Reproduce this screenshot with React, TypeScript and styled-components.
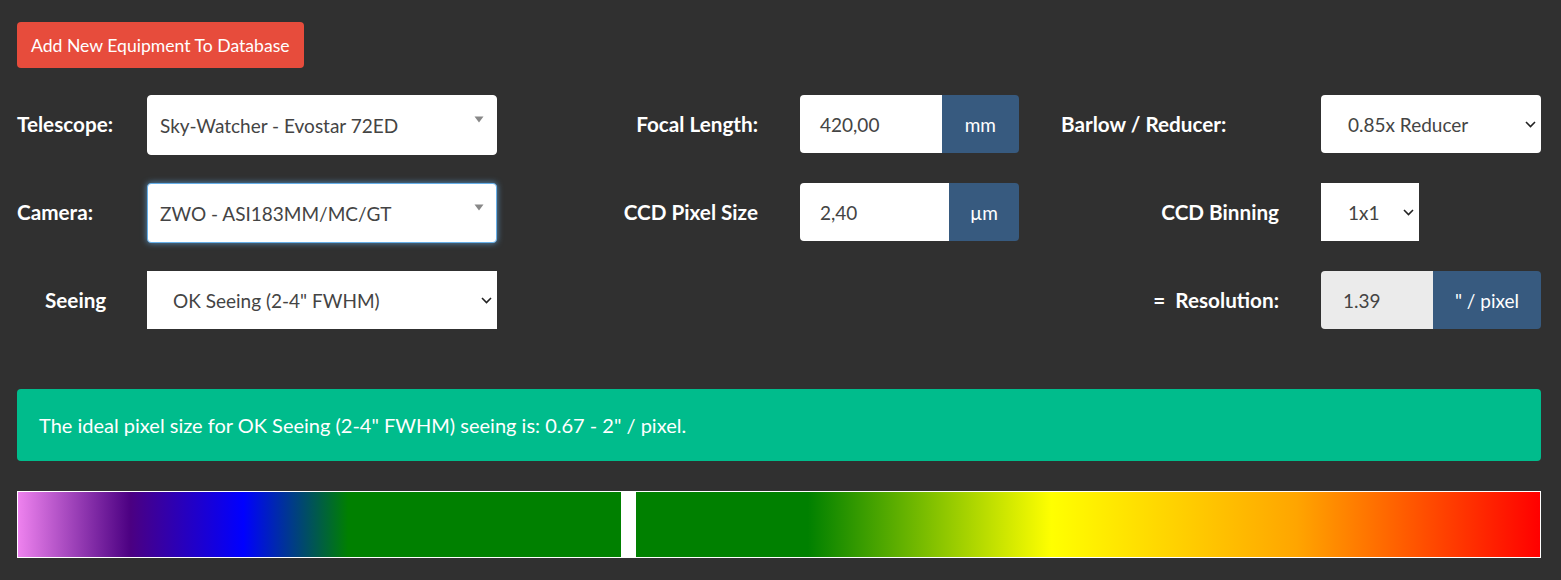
import React from 'react'
import styled, { createGlobalStyle, css } from 'styled-components'

const GlobalStyle = createGlobalStyle`
  html, body {
    margin: 0;
    padding: 0;
    background: #303030;
  }
  body {
    font-family: Lato, 'Open Sans', 'Liberation Sans', sans-serif;
    color: #fff;
  }
`

const Page = styled.div`
  padding: 22px 20px 22px 17px;
  width: 1524px;
`

const AddButton = styled.button`
  display: block;
  height: 46px;
  padding: 0 14px;
  border: none;
  border-radius: 4px;
  background: #e74c3c;
  color: #fff;
  font-family: inherit;
  font-size: 17.6px;
  cursor: pointer;
`

const FormGrid = styled.div`
  margin-top: 27px;
  display: grid;
  grid-template-columns: 130px 350px 303px 219px 302px 220px;
  grid-auto-rows: 58px;
  row-gap: 30px;
`

const Label = styled.div<{ $align?: 'left' | 'right' | 'center' }>`
  display: flex;
  align-items: center;
  font-size: 20.7px;
  font-weight: 700;
  white-space: pre;
  ${(p) =>
    p.$align === 'right'
      ? css`
          justify-content: flex-end;
          padding-right: 42px;
        `
      : p.$align === 'center'
        ? css`
            padding-left: 28px;
          `
        : p.$align === 'left'
          ? css`
              padding-left: 42px;
            `
          : ''}
`

const Empty = styled.div``

const ChosenBox = styled.div<{ $focused?: boolean }>`
  height: 60px;
  display: flex;
  align-items: center;
  justify-content: space-between;
  padding: 0 12px;
  background: #fff;
  border-radius: 4px;
  border: 1px solid #fff;
  box-sizing: border-box;
  color: #444;
  font-size: 19px;
  ${(p) =>
    p.$focused &&
    css`
      border-color: #66afe9;
      box-shadow: 0 0 6px rgba(102, 175, 233, 0.75);
    `}
  svg {
    align-self: flex-start;
    margin-top: 20px;
  }
`

const SelectBox = styled.div<{ $rounded?: boolean; $width?: number; $pad: number }>`
  height: 58px;
  width: ${(p) => (p.$width ? `${p.$width}px` : 'auto')};
  display: flex;
  align-items: center;
  justify-content: space-between;
  padding: 0 5px 0 ${(p) => p.$pad}px;
  box-sizing: border-box;
  background: #fff;
  border-radius: ${(p) => (p.$rounded ? '4px' : '0')};
  color: #444;
  font-size: 19px;
`

const InputGroup = styled.div`
  display: flex;
  height: 58px;
  border-radius: 4px;
  overflow: hidden;
`

const Field = styled.div<{ $readonly?: boolean; $pad: number }>`
  flex: 1;
  display: flex;
  align-items: center;
  padding-left: ${(p) => p.$pad}px;
  background: ${(p) => (p.$readonly ? '#ebebeb' : '#fff')};
  color: #444;
  font-size: 19px;
`

const Addon = styled.div<{ $pad?: number }>`
  display: flex;
  align-items: center;
  padding: 0 ${(p) => p.$pad ?? 23}px;
  background: #375a7f;
  color: #fff;
  font-size: 19px;
`

const Alert = styled.div`
  margin-top: 60px;
  height: 72px;
  display: flex;
  align-items: center;
  padding: 0 22px;
  background: #00bc8c;
  border-radius: 4px;
  color: #fff;
  font-size: 20px;
`

const Scale = styled.div`
  position: relative;
  margin-top: 30px;
  height: 67px;
  box-sizing: border-box;
  border: 1px solid #fff;
  background: linear-gradient(
    to right,
    #ee82ee 0%,
    #4b0082 7.4%,
    #0000ff 14.8%,
    #008000 21.7%,
    #008000 51.9%,
    #ffff00 67.9%,
    #ffa500 84%,
    #ff0000 100%
  );
`

const Marker = styled.div`
  position: absolute;
  top: 0;
  bottom: 0;
  width: 15px;
  background: #fff;
`

const Triangle = () => (
  <svg width="10" height="7" viewBox="0 0 10 7">
    <path d="M0.5 0.5 L9.5 0.5 L5 6.5 Z" fill="#888" />
  </svg>
)

const Chevron = () => (
  <svg width="11" height="7" viewBox="0 0 11 7">
    <path d="M1 1 L5.5 5.5 L10 1" fill="none" stroke="#222" strokeWidth="1.6" />
  </svg>
)

export default function App() {
  const resolution = 1.39
  // marker position across the scale (inner width 1522)
  const markerLeft = 603

  return (
    <Page>
      <GlobalStyle />
      <AddButton>Add New Equipment To Database</AddButton>
      <FormGrid>
        <Label>Telescope:</Label>
        <ChosenBox>
          <span>Sky-Watcher - Evostar 72ED</span>
          <Triangle />
        </ChosenBox>
        <Label $align="right">Focal Length:</Label>
        <InputGroup>
          <Field $pad={20}>420,00</Field>
          <Addon>mm</Addon>
        </InputGroup>
        <Label $align="left">Barlow / Reducer:</Label>
        <SelectBox $rounded $pad={27}>
          <span>0.85x Reducer</span>
          <Chevron />
        </SelectBox>

        <Label>Camera:</Label>
        <ChosenBox $focused>
          <span>ZWO - ASI183MM/MC/GT</span>
          <Triangle />
        </ChosenBox>
        <Label $align="right">CCD Pixel Size</Label>
        <InputGroup>
          <Field $pad={20}>2,40</Field>
          <Addon $pad={21}>µm</Addon>
        </InputGroup>
        <Label $align="right">CCD Binning</Label>
        <SelectBox $width={98} $pad={27}>
          <span>1x1</span>
          <Chevron />
        </SelectBox>

        <Label $align="center">Seeing</Label>
        <SelectBox $pad={26}>
          <span>OK Seeing (2-4" FWHM)</span>
          <Chevron />
        </SelectBox>
        <Empty />
        <Empty />
        <Label $align="right">{'=  Resolution:'}</Label>
        <InputGroup>
          <Field $readonly $pad={22}>
            {resolution.toFixed(2)}
          </Field>
          <Addon $pad={22}>" / pixel</Addon>
        </InputGroup>
      </FormGrid>
      <Alert>The ideal pixel size for OK Seeing (2-4" FWHM) seeing is: 0.67 - 2" / pixel.</Alert>
      <Scale>
        <Marker style={{ left: markerLeft }} />
      </Scale>
    </Page>
  )
}
